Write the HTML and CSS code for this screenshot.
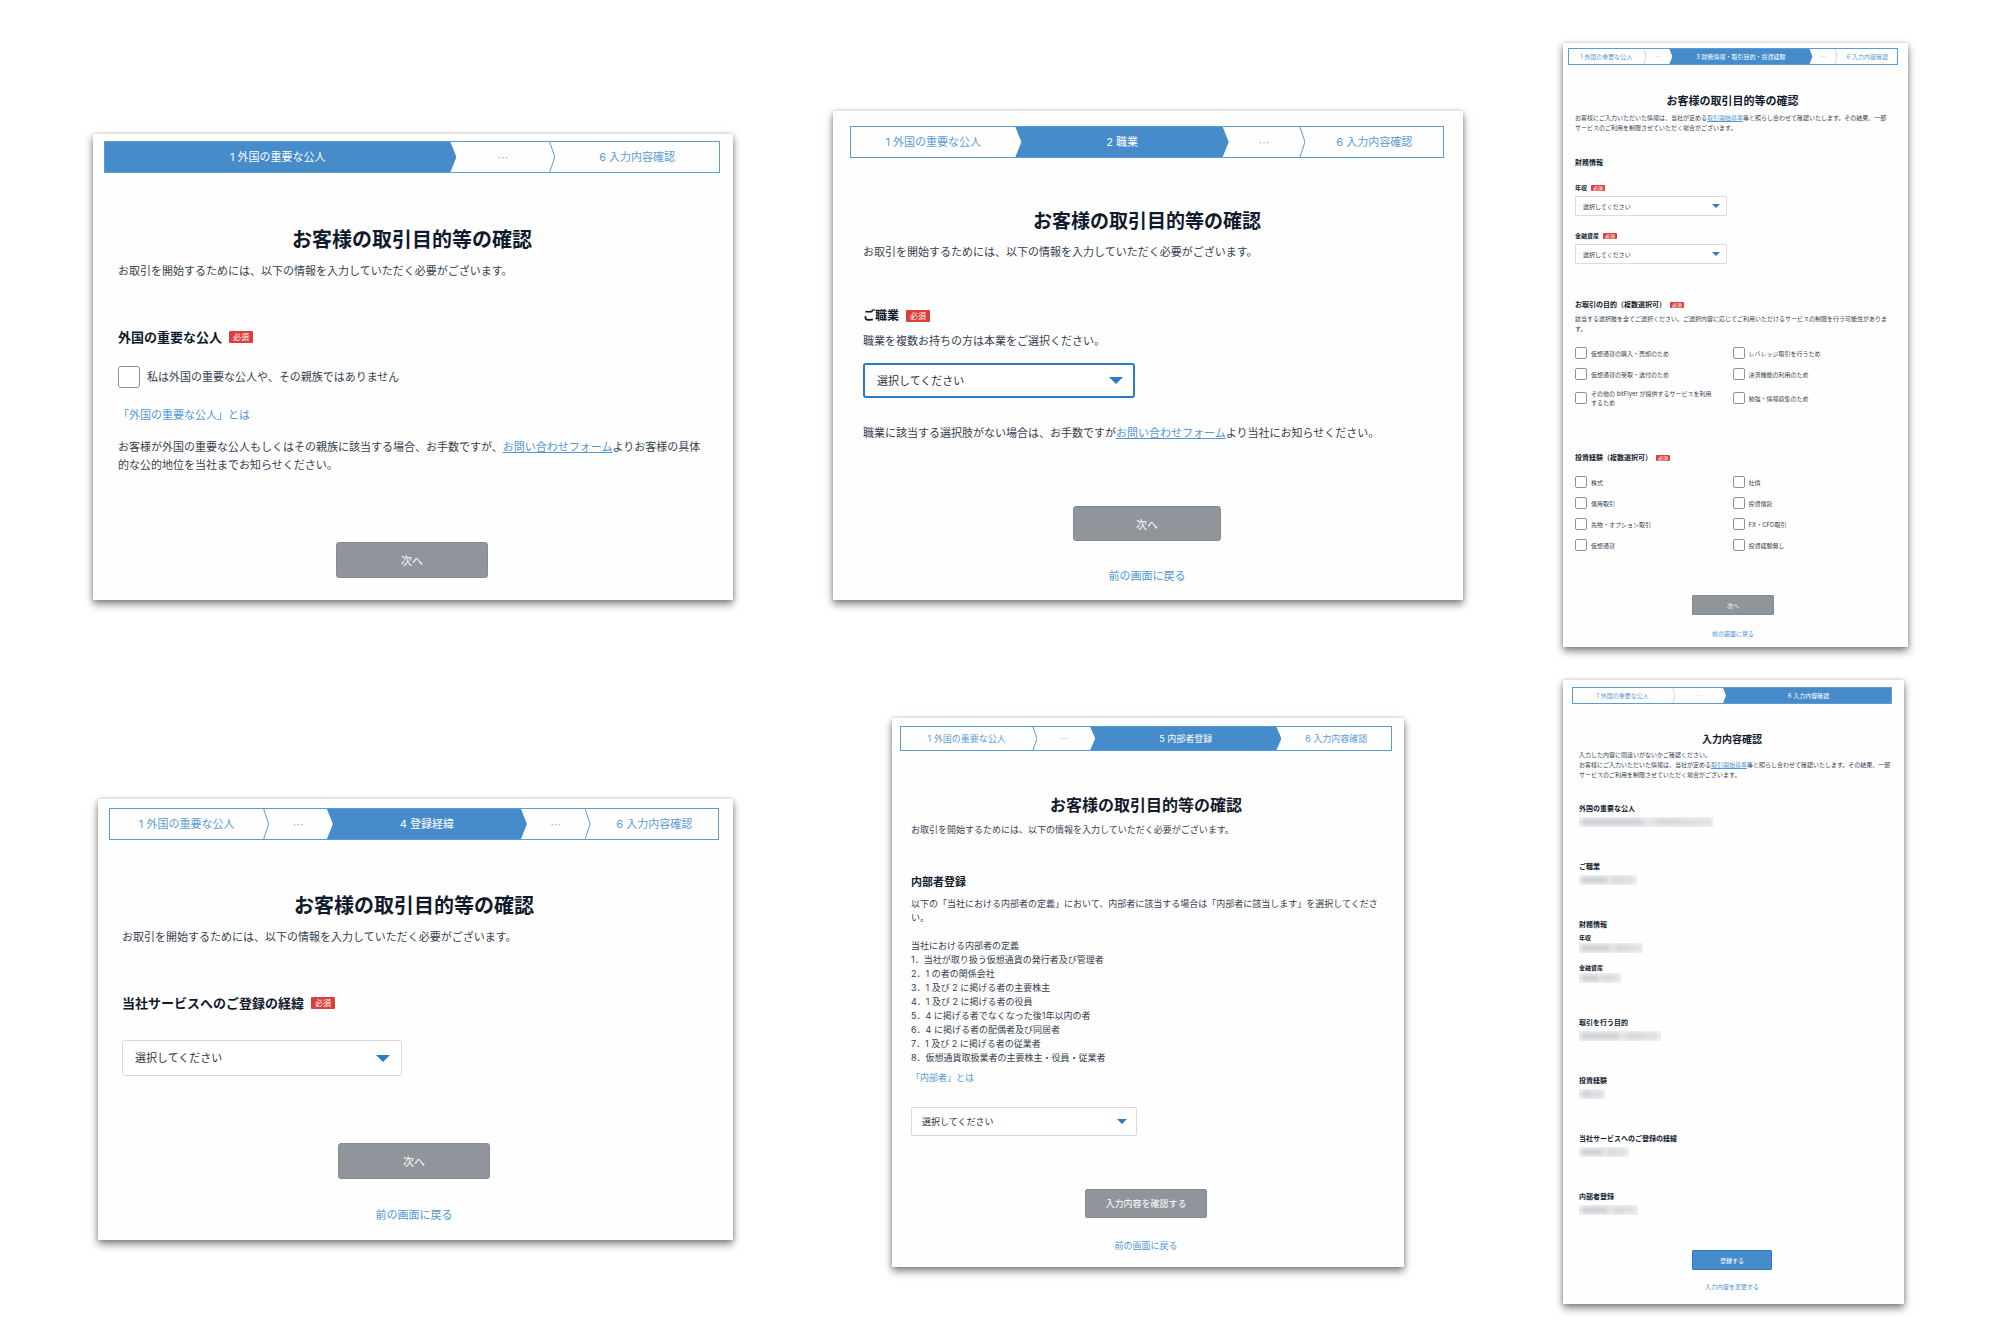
FILE: index.html
```
<!DOCTYPE html>
<html lang="ja">
<head>
    <meta charset="utf-8">
    <title>お客様の取引目的等の確認</title>
    <link rel="stylesheet" href="styles.css">
</head>
<body>
    <main class="board">
        <div class="column column-left">
            <form class="card large card-pep">
                <ol class="steps">
                    <li class="step active">1 外国の重要な公人</li>
                    <li class="step more">…</li>
                    <li class="step">6 入力内容確認</li>
                </ol>
                <div class="content">
                    <h1 class="title">お客様の取引目的等の確認</h1>
                    <p class="lead">お取引を開始するためには、以下の情報を入力していただく必要がございます。</p>
                    <h2 class="heading">外国の重要な公人<span class="badge">必須</span></h2>
                    <label class="check"><input type="checkbox">私は外国の重要な公人や、その親族ではありません</label>
                    <p class="about"><a href="#">「外国の重要な公人」とは</a></p>
                    <p class="note">お客様が外国の重要な公人もしくはその親族に該当する場合、お手数ですが、<a class="underlined" href="#">お問い合わせフォーム</a>よりお客様の具体的な公的地位を当社までお知らせください。</p>
                </div>
                <div class="actions">
                    <button type="button" class="button">次へ</button>
                </div>
            </form>

            <form class="card large card-source">
                <ol class="steps">
                    <li class="step">1 外国の重要な公人</li>
                    <li class="step more before">…</li>
                    <li class="step active">4 登録経緯</li>
                    <li class="step more">…</li>
                    <li class="step">6 入力内容確認</li>
                </ol>
                <div class="content">
                    <h1 class="title">お客様の取引目的等の確認</h1>
                    <p class="lead">お取引を開始するためには、以下の情報を入力していただく必要がございます。</p>
                    <h2 class="heading"><label for="source">当社サービスへのご登録の経緯</label><span class="badge">必須</span></h2>
                    <div class="select">
                        <select id="source"><option>選択してください</option></select>
                    </div>
                </div>
                <div class="actions">
                    <button type="button" class="button">次へ</button>
                    <a href="#">前の画面に戻る</a>
                </div>
            </form>
        </div>

        <div class="column column-middle">
            <form class="card large card-job">
                <ol class="steps">
                    <li class="step before">1 外国の重要な公人</li>
                    <li class="step active">2 職業</li>
                    <li class="step more">…</li>
                    <li class="step">6 入力内容確認</li>
                </ol>
                <div class="content">
                    <h1 class="title">お客様の取引目的等の確認</h1>
                    <p class="lead">お取引を開始するためには、以下の情報を入力していただく必要がございます。</p>
                    <h2 class="heading"><label for="job">ご職業</label><span class="badge">必須</span></h2>
                    <p class="hint">職業を複数お持ちの方は本業をご選択ください。</p>
                    <div class="select focused">
                        <select id="job"><option>選択してください</option></select>
                    </div>
                    <p class="note">職業に該当する選択肢がない場合は、お手数ですが<a class="underlined" href="#">お問い合わせフォーム</a>より当社にお知らせください。</p>
                </div>
                <div class="actions">
                    <button type="button" class="button">次へ</button>
                    <a href="#">前の画面に戻る</a>
                </div>
            </form>

            <form class="card medium card-insider">
                <ol class="steps">
                    <li class="step">1 外国の重要な公人</li>
                    <li class="step more before">…</li>
                    <li class="step active">5 内部者登録</li>
                    <li class="step">6 入力内容確認</li>
                </ol>
                <div class="content">
                    <h1 class="title">お客様の取引目的等の確認</h1>
                    <p class="lead">お取引を開始するためには、以下の情報を入力していただく必要がございます。</p>
                    <h2 class="heading"><label for="insider">内部者登録</label></h2>
                    <p class="hint">以下の「当社における内部者の定義」において、内部者に該当する場合は「内部者に該当します」を選択してください。</p>
                    <div class="definition">
                        <p>当社における内部者の定義</p>
                        <ol class="definition-list">
                            <li>1．当社が取り扱う仮想通貨の発行者及び管理者</li>
                            <li>2．1 の者の関係会社</li>
                            <li>3．1 及び 2 に掲げる者の主要株主</li>
                            <li>4．1 及び 2 に掲げる者の役員</li>
                            <li>5．4 に掲げる者でなくなった後1年以内の者</li>
                            <li>6．4 に掲げる者の配偶者及び同居者</li>
                            <li>7．1 及び 2 に掲げる者の従業者</li>
                            <li>8．仮想通貨取扱業者の主要株主・役員・従業者</li>
                        </ol>
                    </div>
                    <p class="about"><a href="#">「内部者」とは</a></p>
                    <div class="select">
                        <select id="insider"><option>選択してください</option></select>
                    </div>
                </div>
                <div class="actions">
                    <button type="button" class="button">入力内容を確認する</button>
                    <a href="#">前の画面に戻る</a>
                </div>
            </form>
        </div>

        <div class="column column-right">
            <form class="card small card-finance">
                <ol class="steps">
                    <li class="step">1 外国の重要な公人</li>
                    <li class="step more before">…</li>
                    <li class="step active">3 財務情報・取引目的・投資経験</li>
                    <li class="step more">…</li>
                    <li class="step">6 入力内容確認</li>
                </ol>
                <div class="content">
                    <h1 class="title">お客様の取引目的等の確認</h1>
                    <p class="lead">お客様にご入力いただいた情報は、当社が定める<a class="underlined" href="#">取引開始基準</a>等と照らし合わせて確認いたします。その結果、一部サービスのご利用を制限させていただく場合がございます。</p>
                    <h2 class="heading">財務情報</h2>
                    <h3 class="subheading"><label for="income">年収</label><span class="badge">必須</span></h3>
                    <div class="select">
                        <select id="income"><option>選択してください</option></select>
                    </div>
                    <h3 class="subheading"><label for="assets">金融資産</label><span class="badge">必須</span></h3>
                    <div class="select">
                        <select id="assets"><option>選択してください</option></select>
                    </div>
                    <h2 class="heading heading-purpose">お取引の目的（複数選択可）<span class="badge">必須</span></h2>
                    <p class="hint">該当する選択肢を全てご選択ください。ご選択内容に応じてご利用いただけるサービスの制限を行う可能性があります。</p>
                    <div class="checks">
                        <label class="check"><input type="checkbox">仮想通貨の購入・売却のため</label>
                        <label class="check"><input type="checkbox">レバレッジ取引を行うため</label>
                        <label class="check"><input type="checkbox">仮想通貨の受取・送付のため</label>
                        <label class="check"><input type="checkbox">決済機能の利用のため</label>
                        <label class="check"><input type="checkbox">その他の bitFlyer が提供するサービスを利用するため</label>
                        <label class="check"><input type="checkbox">勉強・情報収集のため</label>
                    </div>
                    <h2 class="heading heading-experience">投資経験（複数選択可）<span class="badge">必須</span></h2>
                    <div class="checks">
                        <label class="check"><input type="checkbox">株式</label>
                        <label class="check"><input type="checkbox">社債</label>
                        <label class="check"><input type="checkbox">信用取引</label>
                        <label class="check"><input type="checkbox">投資信託</label>
                        <label class="check"><input type="checkbox">先物・オプション取引</label>
                        <label class="check"><input type="checkbox">FX・CFD取引</label>
                        <label class="check"><input type="checkbox">仮想通貨</label>
                        <label class="check"><input type="checkbox">投資経験無し</label>
                    </div>
                </div>
                <div class="actions">
                    <button type="button" class="button">次へ</button>
                    <a href="#">前の画面に戻る</a>
                </div>
            </form>

            <form class="card small card-confirm">
                <ol class="steps">
                    <li class="step">1 外国の重要な公人</li>
                    <li class="step more before">…</li>
                    <li class="step active last">6 入力内容確認</li>
                </ol>
                <div class="content">
                    <h1 class="title">入力内容確認</h1>
                    <p class="lead">入力した内容に間違いがないかご確認ください。<br>お客様にご入力いただいた情報は、当社が定める<a class="underlined" href="#">取引開始基準</a>等と照らし合わせて確認いたします。その結果、一部サービスのご利用を制限させていただく場合がございます。</p>
                    <section class="answer">
                        <h2>外国の重要な公人</h2>
                        <div class="masked masked-pep"></div>
                    </section>
                    <section class="answer">
                        <h2>ご職業</h2>
                        <div class="masked masked-job"></div>
                    </section>
                    <section class="answer">
                        <h2>財務情報</h2>
                        <h3>年収</h3>
                        <div class="masked masked-income"></div>
                        <h3>金融資産</h3>
                        <div class="masked masked-assets"></div>
                    </section>
                    <section class="answer">
                        <h2>取引を行う目的</h2>
                        <div class="masked masked-purpose"></div>
                    </section>
                    <section class="answer">
                        <h2>投資経験</h2>
                        <div class="masked masked-experience"></div>
                    </section>
                    <section class="answer">
                        <h2>当社サービスへのご登録の経緯</h2>
                        <div class="masked masked-source"></div>
                    </section>
                    <section class="answer">
                        <h2>内部者登録</h2>
                        <div class="masked masked-insider"></div>
                    </section>
                </div>
                <div class="actions">
                    <button type="submit" class="button primary">登録する</button>
                    <a href="#">入力内容を変更する</a>
                </div>
            </form>
        </div>
    </main>
</body>
</html>
```
FILE: styles.css
```
* {
    box-sizing: border-box;
    margin: 0;
    padding: 0;
}
body {
    background-color: #fff;
    color: #353e4e;
    font-family: Inter, "Noto Sans CJK JP", sans-serif;
}
a {
    color: #5197d5;
    text-decoration: none;
}
a.underlined {
    text-decoration: underline;
}
ol {
    list-style: none;
}

/* Board */
.board {
    display: grid;
    grid-template-columns: 640fr 630fr 345fr;
    column-gap: 100px;
    padding: 0 92px 28px 93px;
}
.column {
    display: flex;
    flex-direction: column;
}
.column-left {
    padding-top: 134px;
    gap: 199px;
}
.column-middle {
    padding-top: 111px;
    gap: 118px;
}
.column-right {
    padding-top: 43px;
    gap: 33px;
}

/* Card sizes */
.card {
    background-color: #fefefe;
    box-shadow: 0 4px 8px rgba(0,0,0,0.5), 0 0 4px rgba(0,0,0,0.15);
    font-size: var(--text);
    line-height: var(--line);
}
.large {
    --text: 11px;
    --line: 18px;
    --title: 20px;
    --heading: 13px;
    --badge: 8px;
    --box: 22px;
    --control: 36px;
    --button: 152px;
    --arrow: 6px;
    --caret: 7px;
    --inset: 12px;
    --radius: 3px;
}
.medium {
    --text: 9px;
    --line: 14px;
    --title: 16px;
    --heading: 11px;
    --control: 29px;
    --button: 122px;
    --arrow: 5px;
    --caret: 5px;
    --inset: 10px;
    --radius: 2px;
}
.small {
    --text: 6px;
    --line: 10px;
    --title: 11px;
    --heading: 7px;
    --badge: 5px;
    --box: 12px;
    --control: 20px;
    --button: 82px;
    --arrow: 3px;
    --caret: 4px;
    --inset: 7px;
    --radius: 1px;
}

/* Progress steps */
.steps {
    display: grid;
    height: 32px;
    border: 1px solid #5b9bd6;
}
.medium .steps { height: 25px; }
.small .steps { height: 17px; }
.step {
    display: flex;
    align-items: center;
    text-align: center;
    color: #5b9bd6;
    white-space: nowrap;
    justify-content: center;
    position: relative;
    padding-right: var(--arrow);
}
.step::after {
    content: "";
    position: absolute;
    top: 0;
    right: 0;
    bottom: 0;
    width: var(--arrow);
    background-color: #5b9bd6;
    clip-path: polygon(0 0, 1px 0, 100% 50%, 1px 100%, 0 100%, calc(100% - 1px) 50%);
}
.small .step::after { background-color: #c3daf0; }
.step:last-child {
    padding-right: 0;
}
.step:last-child::after { display: none; }
/* the filled step is cut to a point itself, so no seam shows before its tip */
.step.active {
    color: #fff;
    background-color: #468bca;
    clip-path: polygon(0 0, calc(100% - var(--arrow)) 0, 100% 50%, calc(100% - var(--arrow)) 100%, 0 100%);
}
.step.active::after { display: none; }
.step.active.last { clip-path: none; }
.step.before::after {
    right: -1px;
    width: calc(var(--arrow) + 1px);
    background-color: #468bca;
    clip-path: polygon(0 0, 100% 0, 100% 100%, 0 100%, calc(100% - 1px) 50%);
}
.step.more {
    color: #8db9e2;
    font-family: "Noto Sans CJK JP", sans-serif;
}

/* Card content */
.title {
    color: #101a2c;
    font-size: var(--title);
    line-height: 30px;
    text-align: center;
}
.medium .title { line-height: 24px; }
.small .title { line-height: 16px; }
.heading, .subheading, .answer h2, .answer h3 {
    display: flex;
    align-items: center;
    color: #101a2c;
    font-size: var(--heading);
    line-height: 20px;
}
.medium .heading { line-height: 16px; }
.small .heading, .subheading, .answer h2, .answer h3 { line-height: 10px; }
.subheading, .answer h3 { font-size: var(--text); }
.badge {
    background-color: #d9403c;
    color: #fff;
    font-size: var(--badge);
    font-weight: normal;
    line-height: 12px;
    margin-left: 7px;
    padding: 0 4px;
    border-radius: 1px;
}
.small .badge {
    line-height: 6px;
    margin-left: 4px;
    padding: 0 2px;
}
.check {
    display: flex;
    align-items: center;
    gap: 7px;
}
.check input {
    appearance: none;
    flex: none;
    width: var(--box);
    height: var(--box);
    background-color: #fff;
    border: 1px solid #8d939b;
    border-radius: 3px;
}
.checks {
    display: grid;
    grid-template-columns: 1fr 1fr;
    row-gap: 9px;
}
.small .check {
    gap: 4px;
    padding-right: 17px;
    line-height: 9px;
}
.small .check input { border-radius: 2px; }
.select {
    position: relative;
    width: 280px;
}
.medium .select { width: 226px; }
.small .select { width: 152px; }
.select select {
    appearance: none;
    display: block;
    width: 100%;
    height: var(--control);
    padding-left: var(--inset);
    background-color: #fff;
    border: 1px solid #d9dbdd;
    border-radius: var(--radius);
    color: #333;
    font-family: inherit;
    font-size: var(--text);
}
.select.focused select { border: 2px solid #2a7cc7; }
.select::after {
    content: "";
    position: absolute;
    top: calc(50% - var(--caret) / 2);
    right: var(--inset);
    border: var(--caret) solid transparent;
    border-top-color: #2a7cc7;
    border-bottom: 0;
    pointer-events: none;
}
.actions {
    display: flex;
    flex-direction: column;
    align-items: center;
}
.button {
    width: var(--button);
    height: var(--control);
    background-color: #90959c;
    border: 1px solid #858b92;
    border-radius: var(--radius);
    color: #fff;
    font-family: inherit;
    font-size: var(--text);
}
.button.primary {
    background-color: #468bca;
    border-color: #2a7cc7;
}

/* 1: foreign PEP */
.card-pep { padding: 7px 13px 22px 11px; }
.card-pep .steps { grid-template-columns: 352fr 99fr 164fr; }
.card-pep .content { padding: 0 14px; }
.large .title { margin-top: 52px; }
.large .lead { margin-top: 7px; }
.large .heading { margin-top: 47px; }
.card-pep .check { margin-top: 19px; }
.card-pep .about { margin-top: 18px; }
.card-pep .note { margin-top: 14px; }
.large .actions {
    margin-top: 68px;
    gap: 27px;
}

/* 2: job */
.card-job {
    --title: 19px;
    --heading: 12px;
    --control: 35px;
    --button: 148px;
    padding: 15px 19px 15px 17px;
}
.card-job .steps { grid-template-columns: 171fr 208fr 77fr 138fr; }
.card-job .content { padding: 0 13px; }
.card-job .title { margin-top: 49px; }
.card-job .lead { margin-top: 6px; }
.card-job .heading { margin-top: 45px; }
.card-job .hint { margin-top: 6px; }
.card-job .select {
    width: 272px;
    margin-top: 13px;
}
.card-job .note { margin-top: 26px; }
.card-job .actions {
    margin-top: 64px;
    gap: 26px;
}

/* 3: finance, purpose, experience */
.card-finance { padding: 5px 10px 8px 5px; }
.card-finance .steps { grid-template-columns: 78fr 26fr 141fr 25fr 60fr; }
.card-finance .content { padding: 0 8px 0 7px; }
.small .title { margin-top: 28px; }
.small .lead { margin-top: 4px; }
.small .heading { margin-top: 25px; }
.small .subheading { margin-top: 15px; }
.small .select { margin-top: 3px; }
.small .heading-purpose { margin-top: 36px; }
.small .hint { margin-top: 4px; }
.small .checks { margin-top: 13px; }
.small .heading-experience { margin-top: 46px; }
.small .actions {
    margin-top: 44px;
    gap: 14px;
}

/* 4: registration source */
.card-source {
    margin-left: 5px;
    padding: 9px 14px 16px 11px;
}
.card-source .steps { grid-template-columns: 160fr 64fr 195fr 64fr 128fr; }
.card-source .content { padding: 0 13px; }
.card-source .title { margin-top: 51px; }
.card-source .select { margin-top: 27px; }
.card-source .actions { margin-top: 67px; }

/* 5: insider */
.card-insider {
    margin: 0 59px;
    padding: 8px 12px 14px 8px;
}
.card-insider .steps { grid-template-columns: 137fr 58fr 187fr 110fr; }
.card-insider .content { padding: 0 11px; }
.card-insider .title { margin-top: 42px; }
.card-insider .lead { margin-top: 6px; }
.card-insider .heading { margin-top: 37px; }
.card-insider .hint { margin-top: 7px; }
.definition { margin-top: 14px; }
.card-insider .about { margin-top: 6px; }
.card-insider .select { margin-top: 22px; }
.card-insider .actions {
    margin-top: 53px;
    gap: 21px;
}

/* 6: confirmation */
.card-confirm {
    --title: 10px;
    --button: 80px;
    margin-right: 4px;
    padding: 7px 12px 12px 9px;
}
.card-confirm .steps { grid-template-columns: 103fr 51fr 166fr; }
.card-confirm .content { padding: 0 0 0 7px; }
.card-confirm .title {
    margin-top: 27px;
    padding-right: 7px;
}
.card-confirm .lead { margin-top: 3px; }
.answer { margin-top: 35px; }
.lead + .answer { margin-top: 24px; }
.answer h3 { margin-top: 3px; }
.masked + h3 { margin-top: 10px; }
.masked {
    height: 10px;
    overflow: hidden;
    background-color: #f1f2f3;
}
.masked::before {
    content: "";
    display: block;
    height: 6px;
    margin: 2px;
    background: linear-gradient(90deg, #c9ccd0 45%, #e6e7e9 52%, #cfd2d5 62%, #dcdee0);
    filter: blur(2px);
}
.answer h2 + .masked { margin-top: 3px; }
.masked-pep { width: 134px; }
.masked-job { width: 58px; }
.masked-income { width: 64px; }
.masked-assets { width: 42px; }
.masked-purpose { width: 82px; }
.masked-experience { width: 26px; }
.masked-source { width: 50px; }
.masked-insider { width: 59px; }
.card-confirm .actions {
    margin-top: 35px;
    gap: 12px;
}
```
